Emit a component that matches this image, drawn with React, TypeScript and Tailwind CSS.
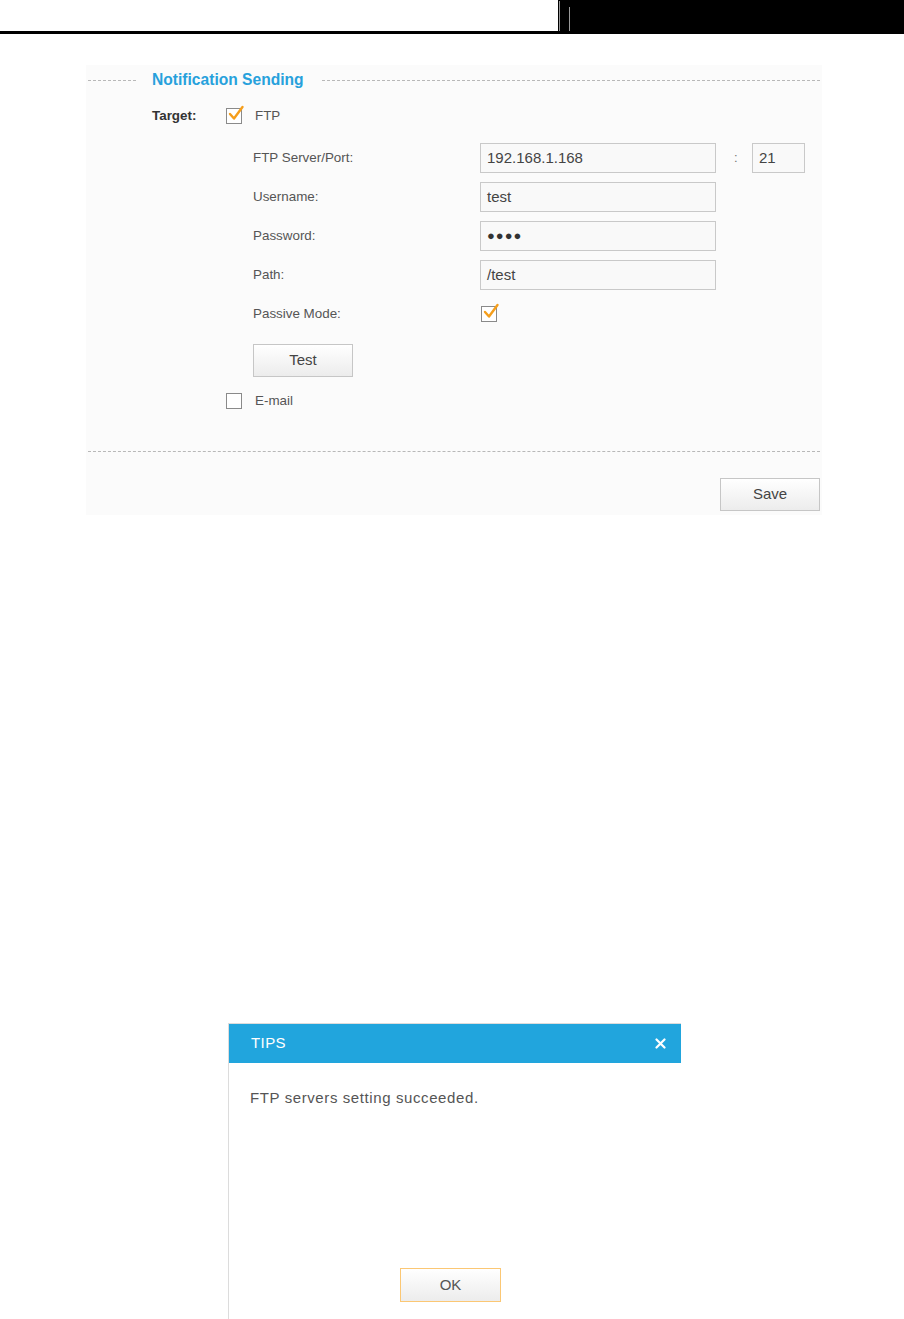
import React from "react";

function Check({ checked }: { checked?: boolean }) {
  return (
    <span className="relative inline-block w-[16px] h-[16px] border border-[#8a8a8a] bg-white shrink-0">
      {checked && (
        <svg className="absolute -top-[4px] left-[1px] w-[17px] h-[16px] overflow-visible" viewBox="0 0 17 16" fill="none">
          <path d="M2 9l4 4.5L14.5 2" stroke="#f59e1b" strokeWidth="2.4" strokeLinecap="round" strokeLinejoin="round" />
        </svg>
      )}
    </span>
  );
}

function Field({ label, value, extra }: { label: string; value: React.ReactNode; extra?: React.ReactNode }) {
  return (
    <div className="flex items-center h-[30px]">
      <div className="w-[227px] text-[13.4px] text-[#555]">{label}</div>
      <div className="w-[236px] h-[30px] border border-[#c9c9c9] bg-[#f9f9f9] flex items-center pl-[6px] text-[15px] text-[#444]">
        {value}
      </div>
      {extra}
    </div>
  );
}

const btn =
  "h-[33px] w-[100px] border border-[#c6c6c6] bg-gradient-to-b from-white to-[#ececec] text-[15px] text-[#444] flex items-center justify-center";

export default function App() {
  return (
    <div className="w-[904px] h-[1319px] overflow-hidden bg-white font-['Liberation_Sans',Arial,sans-serif]">
      {/* page header */}
      <div className="flex h-[31px]">
        <div className="w-[558px] bg-white" />
        <div className="flex-1 bg-black flex">
          <div className="w-[1px] h-[30px] mt-[1px] ml-[1px] bg-[#9a9a9a]" />
          <div className="w-[1px] h-[24px] mt-[7px] ml-[9px] bg-[#9a9a9a]" />
        </div>
      </div>
      <div className="h-[3px] bg-black" />

      {/* settings panel */}
      <div className="mt-[31px] ml-[86px] w-[736px] bg-[#fbfbfb] pb-[4px]">
        <div className="flex items-center h-[30px]">
          <div className="ml-[2px] w-[48px] border-t border-dashed border-[#b8b8b8]" />
          <div className="ml-[16px] text-[15.6px] font-bold text-[#27a1dc]">Notification Sending</div>
          <div className="ml-[18px] mr-[2px] flex-1 border-t border-dashed border-[#b8b8b8]" />
        </div>

        <div className="mt-[11px] flex items-center h-[20px]">
          <div className="ml-[66px] w-[74px] text-[13.4px] font-bold text-[#333]">Target:</div>
          <Check checked />
          <span className="ml-[13px] text-[13.4px] text-[#555]">FTP</span>
        </div>

        <div className="ml-[167px] mt-[17px] flex flex-col gap-[9px]">
          <Field
            label="FTP Server/Port:"
            value="192.168.1.168"
            extra={
              <>
                <span className="ml-[18px] w-[18px] text-[13px] text-[#777]">:</span>
                <div className="w-[53px] h-[30px] border border-[#c9c9c9] bg-[#f9f9f9] flex items-center pl-[6px] text-[15px] text-[#444]">
                  21
                </div>
              </>
            }
          />
          <Field label="Username:" value="test" />
          <Field label="Password:" value={<span className="text-[13px] tracking-[1px] text-[#333]">●●●●</span>} />
          <Field label="Path:" value="/test" />
          <div className="flex items-center h-[30px]">
            <div className="w-[228px] text-[13.4px] text-[#555]">Passive Mode:</div>
            <Check checked />
          </div>
        </div>

        <div className="ml-[167px] mt-[15px]">
          <button className={btn}>Test</button>
        </div>

        <div className="mt-[14px] ml-[140px] flex items-center h-[20px]">
          <Check />
          <span className="ml-[13px] text-[13.4px] text-[#555]">E-mail</span>
        </div>

        <div className="mt-[40px] mx-[2px] border-t border-dashed border-[#b8b8b8]" />

        <div className="mt-[26px] flex justify-end pr-[2px]">
          <button className={btn}>Save</button>
        </div>
      </div>

      {/* tips dialog */}
      <div className="mt-[508px] ml-[228px] w-[453px] h-[400px] border-l border-t border-[#dcdcdc] bg-white">
        <div className="h-[39px] bg-[#21a5dd] flex items-center justify-between pl-[22px] pr-[15px]">
          <span className="text-[15px] text-white tracking-[0.4px]">TIPS</span>
          <svg className="w-[11px] h-[11px]" viewBox="0 0 11 11">
            <path d="M1.5 1.5l8 8M9.5 1.5l-8 8" stroke="white" strokeWidth="2.2" strokeLinecap="round" />
          </svg>
        </div>
        <div className="mt-[25px] pl-[21px] h-[20px] flex items-center text-[15px] text-[#555] tracking-[0.6px]">
          FTP servers setting succeeded.
        </div>
        <div className="mt-[160px] ml-[171px]">
          <button className="h-[34px] w-[101px] border border-[#fbc774] bg-gradient-to-b from-white to-[#ececec] text-[15px] text-[#555] flex items-center justify-center">
            OK
          </button>
        </div>
      </div>
    </div>
  );
}
